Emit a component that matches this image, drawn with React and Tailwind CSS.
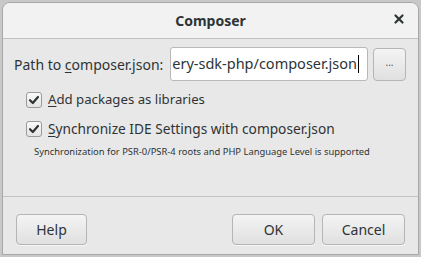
import React from "react";

function Check() {
  return (
    <div className="w-[16px] h-[16px] rounded-[3px] border border-[#9a9a9a] bg-gradient-to-b from-[#fafafa] to-[#e4e4e4] flex items-center justify-center">
      <svg width="12" height="12" viewBox="0 0 12 12">
        <path d="M2 6.2 L4.8 9 L10 3" fill="none" stroke="#2e3436" strokeWidth="2.2" strokeLinecap="round" strokeLinejoin="round" />
      </svg>
    </div>
  );
}

function Btn({ children, w }) {
  return (
    <div className={`${w} h-[31px] rounded-[4px] border border-[#b5b5b5] bg-gradient-to-b from-[#f4f4f4] to-[#e0e0e0] flex items-center justify-center text-[14px] text-[#2e3436] shadow-[0_1px_0_rgba(255,255,255,0.6)]`}>
      {children}
    </div>
  );
}

export default function App() {
  return (
    <div className="w-[421px] h-[257px] bg-[#c8c8c8] p-[2px] overflow-hidden" style={{ fontFamily: '"Noto Sans", "Open Sans", sans-serif' }}>
      <div className="w-[417px] h-[253px] rounded-t-[8px] border border-[#a8a8a8] bg-[#e8e8e8] flex flex-col overflow-hidden">
        <div className="h-[36px] bg-[#f2f2f2] border-b border-[#c2c2c2] flex items-center relative">
          <div className="flex-1 text-center font-bold text-[14px] text-[#2e3436]">Composer</div>
          <div className="absolute right-[12px] top-[9px] text-[#2e3436]">
            <svg width="14" height="14" viewBox="0 0 14 14">
              <path d="M3.5 3.5 L10.5 10.5 M10.5 3.5 L3.5 10.5" stroke="#2e3436" strokeWidth="2.2" strokeLinecap="round" />
            </svg>
          </div>
        </div>
        <div className="flex-1 flex flex-col px-[10px] pt-[8px]">
          <div className="flex items-center h-[34px]">
            <div className="text-[14px] text-[#2e3436] w-[157px] pl-[1px]">
              Path to <span className="underline underline-offset-2">c</span>omposer.json:
            </div>
            <div className="w-[198px] h-[34px] bg-white border border-[#b8b8b8] rounded-[3px] overflow-hidden flex items-center justify-end pr-[8px] text-[14.5px] text-[#2e3436] whitespace-nowrap">
              <span>ery-sdk-php/composer.json</span>
              <span className="inline-block w-[1px] h-[18px] bg-black ml-[1px]"></span>
            </div>
            <div className="ml-[5px] w-[33px] h-[33px] rounded-[4px] border border-[#b5b5b5] bg-gradient-to-b from-[#f4f4f4] to-[#e0e0e0] flex items-center justify-center text-[10px] text-[#555] leading-none pb-[4px]">
              ...
            </div>
          </div>
          <div className="flex items-center gap-[6px] pl-[13px] mt-[10px] h-[18px]">
            <Check />
            <div className="text-[13.2px] text-[#2e3436]"><span className="underline underline-offset-2">A</span>dd packages as libraries</div>
          </div>
          <div className="flex items-center gap-[6px] pl-[13px] mt-[11px] h-[18px]">
            <Check />
            <div className="text-[13.7px] text-[#2e3436]"><span className="underline underline-offset-2">S</span>ynchronize IDE Settings with composer.json</div>
          </div>
          <div className="pl-[21px] mt-[7px] text-[9.4px] text-[#2e3436]">
            Synchronization for PSR-0/PSR-4 roots and PHP Language Level is supported
          </div>
        </div>
        <div className="border-t border-[#c4c4c4] h-[58px] flex items-start pt-[17px] px-[13px]">
          <Btn w="w-[71px]">Help</Btn>
          <div className="flex-1"></div>
          <Btn w="w-[83px]">OK</Btn>
          <div className="w-[7px]"></div>
          <Btn w="w-[83px]">Cancel</Btn>
        </div>
      </div>
    </div>
  );
}
